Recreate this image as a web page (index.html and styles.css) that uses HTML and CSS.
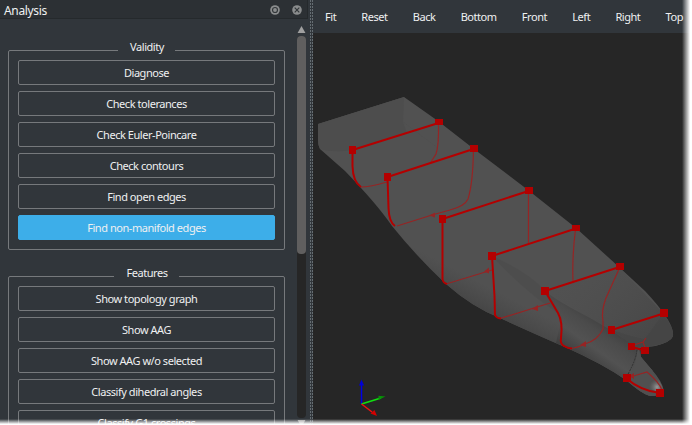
FILE: index.html
```html
<!DOCTYPE html>
<html lang="en">
<head>
<meta charset="utf-8">
<title>Analysis</title>
<link rel="stylesheet" href="styles.css">
</head>
<body>
<div class="window">
  <aside class="dock">
    <header class="dock-title">
      <span class="dock-name">Analysis</span>
      <svg class="dock-icon" viewBox="0 0 10 10"><circle cx="5" cy="5" r="4.8" fill="#8b8d8e"/><circle cx="5" cy="5" r="2.5" fill="#8b8d8e" stroke="#33373a" stroke-width="1.2"/></svg>
      <svg class="dock-icon" viewBox="0 0 10 10"><circle cx="5" cy="5" r="4.8" fill="#8b8d8e"/><path d="M2.700 2.700l4.600 4.600M7.300 2.700L2.700 7.300" stroke="#33373a" stroke-width="1.200"/></svg>
    </header>
    <div class="dock-body">
      <div class="groups">
        <section class="group">
          <h2 class="legend"><span>Validity</span></h2>
          <button>Diagnose</button>
          <button>Check tolerances</button>
          <button>Check Euler-Poincare</button>
          <button>Check contours</button>
          <button>Find open edges</button>
          <button class="active">Find non-manifold edges</button>
        </section>
        <section class="group">
          <h2 class="legend"><span>Features</span></h2>
          <button>Show topology graph</button>
          <button>Show AAG</button>
          <button>Show AAG w/o selected</button>
          <button>Classify dihedral angles</button>
          <button>Classify G1 crossings</button>
        </section>
      </div>
      <div class="scrollbar">
        <svg class="arrow" viewBox="0 0 9 8"><path d="M4.500 0L9 8H0z" fill="#a0a0a0"/></svg>
        <div class="track"><div class="thumb"></div></div>
        <svg class="arrow down" viewBox="0 0 9 8"><path d="M4.500 8L9 0H0z" fill="#a0a0a0"/></svg>
      </div>
    </div>
  </aside>
  <div class="splitter"></div>
  <main class="viewer">
    <nav class="toolbar">
      <span>Fit</span><span>Reset</span><span>Back</span><span>Bottom</span><span>Front</span><span>Left</span><span>Right</span><span>Top</span>
    </nav>
    <svg class="scene" viewBox="313 33 379 392">
      <defs>
        <linearGradient id="under" gradientUnits="userSpaceOnUse" x1="478" y1="281" x2="467" y2="302">
          <stop offset="0" stop-color="#484848" stop-opacity="0"/><stop offset="1" stop-color="#464646"/>
        </linearGradient>
        <linearGradient id="keel" gradientUnits="userSpaceOnUse" x1="606" y1="323" x2="580" y2="360">
          <stop offset="0" stop-color="#414141"/><stop offset=".25" stop-color="#4b4b4b"/><stop offset=".6" stop-color="#525252"/><stop offset="1" stop-color="#3e3e3e"/>
        </linearGradient>
        <radialGradient id="glint" gradientUnits="userSpaceOnUse" cx="657" cy="387" r="8">
          <stop offset="0" stop-color="#999"/><stop offset="1" stop-color="#666" stop-opacity="0"/>
        </radialGradient>
        <linearGradient id="side" gradientUnits="userSpaceOnUse" x1="580" y1="265" x2="650" y2="335">
          <stop offset="0" stop-color="#4d4d4d" stop-opacity="0"/><stop offset="1" stop-color="#484848"/>
        </linearGradient>
      </defs>
      <path fill="#515151" d="M318 124L404 97L438 121L474 149L528 190L576 228L619 267L645 291Q659 306 664 314Q674 328 673 336Q671 342 655 346Q646 347 640 348L641 357Q645 363 652 370Q662 381 664 391Q660 396 650 396Q642 394 626 380Q603 364 565 347Q535 334 500 318Q472 307 446 284Q417 257 392 226Q377 204 345 171L320 149Q318 145 318 140z"/>
      <path fill="#4d4d4d" d="M318 124L404 97L403 122L438 148V123L352 150Q334 153 320 149Q318 145 318 140z"/>
      <path fill="#515151" d="M403 122L438 148V123L407 133z"/>
      <path fill="url(#under)" d="M320 149L345 171Q377 204 392 226Q417 257 446 284Q472 307 500 318Q535 334 565 347L590 322L545 291L492 256L442 219L387 177L352 150z"/>
      <path fill="url(#side)" d="M545 291L619 267L664 314Q674 328 673 336Q671 342 655 346L637 348z"/>
      <path fill="url(#keel)" d="M545 291Q553 298 575 310Q610 328 637 348L640 348L641 357L652 370L664 391Q660 396 650 396Q642 394 626 380Q603 364 565 347L556 343L561 320z"/>
      <path fill="#4a4a4a" d="M492 256Q530 273 545 291L558 313Q525 292 492 256z" opacity=".45"/>
      <path fill="#505050" d="M639 350L641 357L652 370L664 391Q660 396 650 396Q640 393 628 381Q637 362 637 350z"/>
      <path fill="#424242" d="M663 314L645 339Q635 338 612 330L637 348Q671 344 673 336Q674 328 663 314z" opacity=".45"/>
      <path fill="url(#glint)" d="M647 372L640 385L660 393L664 391Q660 379 652 370z"/>
      <path fill="none" stroke="#303030" stroke-dasharray="2 1" d="M637 350Q636 360 627 376"/>
      <g class="hidden-edges">
        <path d="M361 187Q370 187 387 182M438.500 123Q439 145 436 154L431 162"/>
        <path d="M473.500 149Q473 183 468 199Q465 206 450 210L432 215L397 226M528.500 192V243"/>
        <path d="M446 284L492 270M575.500 229Q572 258 573 281M500 318.500L550 303"/>
        <path d="M619.500 268L606 298Q601 311 603 321V329Q598 340 585 344Q577 348 570 348.500"/>
        <path d="M631 346L643 342L646 338M643 342L646 350M627 378L647 372Q659 382 662 390"/>
      </g>
      <path fill="#962424" d="M429 215.500l6-3v5zM484 271.500l5-4v6zM532 309l6-4v6zM580 345l6-4v6zM629 376l5-3v6z"/>
      <g class="edges">
        <path d="M438.500 123L352.500 150V166Q353 182 361 187"/>
        <path d="M473.500 149L387.500 177L388.500 208Q389 222 395 226"/>
        <path d="M528.500 191L442.500 219V279Q443 283 447 284"/>
        <path d="M576 228.500L492 256L494.500 296L495 315Q496 318 501 318.500"/>
        <path d="M619.500 267L545 291L558 313Q563 322 561 338Q560 344 564 346Q568 348.500 572 348.500"/>
        <path d="M663.500 313.500L611.500 330M631.500 347L645 350.500"/>
        <path d="M626.500 378.500Q641 391 660 393"/>
      </g>
      <path fill="#b40000" d="M435 119h8v6h-8zM349 146h7v8h-7zM470 145h8v7h-8zM384 173h7v8h-7zM525 187h8v7h-8zM439 215h7v8h-7zM572 225h8v6h-8zM488 252h8v8h-8zM616 263h8v7h-8zM541 287h8v8h-8zM660 309h8v8h-8zM608 326h7v8h-7zM628 343h7v7h-7zM641 347h8v7h-8zM623 374h8v8h-8zM656 389h8v8h-8z"/>
      <g fill="none" stroke-width="1.500">
        <path stroke="#0000e8" d="M361.500 404V384"/><path stroke="#10e010" d="M361.500 404L381 398"/><path stroke="#f01010" d="M361.500 404L372 412"/>
      </g>
      <path fill="#0000d8" d="M361.500 379.500l2.500 6h-5z"/><path fill="#079307" d="M385.500 396.500l-7-.7v4z"/><path fill="#d40000" d="M377 416l-6.500-2.500 4-3.500z"/>
    </svg>
  </main>
  <div class="fade-right"></div>
  <div class="fade-bottom"></div>
</div>
</body>
</html>
```
FILE: styles.css
```css
* { box-sizing: border-box; }
body {
  margin: 0;
  background: #fff;
  font-family: "Noto Sans", "Open Sans", sans-serif;
  font-size: 11px;
  letter-spacing: -.45px;
  color: #eff0f1;
}
.window {
  position: relative;
  display: flex;
  width: 692px;
  height: 425px;
  overflow: hidden;
  background: #31363b;
}
.dock { width: 309px; display: flex; flex-direction: column; }
.dock-title {
  height: 19px;
  width: 308px;
  flex: none;
  display: flex;
  align-items: center;
  gap: 12px;
  padding: 2px 5px 0 4px;
  background: #2c3034;
  border-bottom: 1px solid #25292c;
  border-right: 1px solid #25292c;
}
.dock-name { flex: 1; font-size: 12px; line-height: 16px; padding-top: 2px; letter-spacing: -.35px; }
.dock-icon { width: 10px; height: 10px; }
.dock-body { flex: 1; display: flex; min-height: 0; }
.groups { width: 297px; padding: 31px 12px 0 8px; overflow: hidden; }
.group {
  width: 277px;
  height: 200px;
  padding: 9px 9px 0;
  border: 1px solid #76797c;
  border-radius: 2px;
  display: flex;
  flex-direction: column;
  gap: 6px;
}
.group + .group { margin-top: 26px; }
.legend {
  height: 14px;
  margin: -20px 0 0;
  font: inherit;
  line-height: 14px;
  text-align: center;
}
.legend span { display: inline-block; padding: 0 11px 0 12px; background: #31363b; }
.group button {
  flex: none;
  height: 25px;
  padding: 0;
  border: 1px solid #76797c;
  border-radius: 2px;
  background: #31363b;
  color: inherit;
  font: inherit;
  letter-spacing: inherit;
  line-height: 23px;
}
.group .active { background: #3daee9; border-color: #3daee9; }
.scrollbar { width: 9px; padding-top: 7px; display: flex; flex-direction: column; }
.arrow { flex: none; width: 9px; height: 7px; display: block; }
.track { flex: none; height: 382px; margin-top: 3px; background: #262626; border-radius: 4px; }
.thumb { height: 218px; background: #605f5f; border-radius: 4px; }
.down { margin-top: 2px; }
.splitter {
  width: 4px;
  background: radial-gradient(circle at 1.5px 1px, #656d72 .6px, transparent .9px) 0 0 / 2px 3px;
}
.viewer { flex: 1; background: #262626; }
.toolbar { height: 33px; display: flex; gap: 25.2px; padding-left: 12px; background: #31363b; line-height: 34px; }
.scene { display: block; width: 379px; height: 392px; }
.hidden-edges { fill: none; stroke: #962424; stroke-width: 1.2; }
.edges { fill: none; stroke: #b40000; stroke-width: 2; stroke-linejoin: round; }
.fade-right, .fade-bottom { position: absolute; right: 0; bottom: 0; }
.fade-right { top: 0; width: 10px; background: linear-gradient(90deg, rgba(255,255,255,0), #fff 80%); }
.fade-bottom { left: 0; height: 6px; width: 100%; background: linear-gradient(rgba(255,255,255,0), #fff 85%); }
```
